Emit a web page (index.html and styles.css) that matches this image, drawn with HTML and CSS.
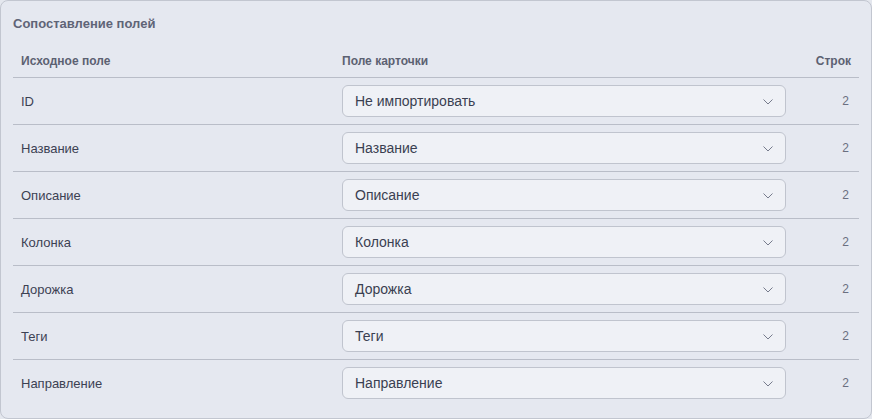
FILE: index.html
```html
<!DOCTYPE html>
<html lang="ru">
<head>
  <meta charset="UTF-8">
  <meta name="viewport" content="width=device-width, initial-scale=1.0">
  <title>Сопоставление полей</title>
  <link rel="stylesheet" href="styles.css">
</head>
<body>
  <div class="card">
    <div class="card-title">Сопоставление полей</div>
    <table class="map">
      <colgroup>
        <col class="c-src">
        <col class="c-field">
        <col class="c-rows">
      </colgroup>
      <thead>
        <tr>
          <th>Исходное поле</th>
          <th>Поле карточки</th>
          <th class="num">Строк</th>
        </tr>
      </thead>
      <tbody id="rows"></tbody>
    </table>
  </div>

  <script>
    const rows = [
      ["ID", "Не импортировать", 2],
      ["Название", "Название", 2],
      ["Описание", "Описание", 2],
      ["Колонка", "Колонка", 2],
      ["Дорожка", "Дорожка", 2],
      ["Теги", "Теги", 2],
      ["Направление", "Направление", 2]
    ];
    const chevron = '<svg width="12" height="7" viewBox="0 0 12 7"><path d="M1.5 1.5l4.5 4.5 4.5-4.5" fill="none" stroke="#767b8c" stroke-width="1"/></svg>';
    const tbody = document.getElementById("rows");
    rows.forEach(r => {
      const tr = document.createElement("tr");
      tr.innerHTML =
        "<td>" + r[0] + "</td>" +
        '<td><div class="select"><span>' + r[1] + "</span>" + chevron + "</div></td>" +
        '<td class="num">' + r[2] + "</td>";
      tbody.appendChild(tr);
    });
  </script>
</body>
</html>
```

FILE: styles.css
```css
body {
  margin: 0;
  background: #e4e7ee;
  font-family: "Liberation Sans", Arial, sans-serif;
  color: #3c4153;
}
.card {
  box-sizing: border-box;
  width: 872px;
  height: 419px;
  background: #e5e8f0;
  border: 1px solid #c2c6d0;
  border-radius: 8px;
  padding: 14px 12px 0 12px;
}
.card-title {
  font-size: 13px;
  font-weight: bold;
  color: #5f6477;
  line-height: 17px;
  margin-bottom: 9px;
}
.map {
  width: 846px;
  table-layout: fixed;
  border-collapse: collapse;
}
.c-src { width: 321px; }
.c-field { width: 460px; }
.c-rows { width: 65px; }
.map th {
  font-size: 12px;
  font-weight: bold;
  color: #5c6172;
  text-align: left;
  height: 33px;
  padding: 3px 8px 0 8px;
  border-bottom: 1px solid #b9bdc8;
}
.map td {
  font-size: 13px;
  height: 46px;
  padding: 0 8px;
  border-bottom: 1px solid #b9bdc8;
}
.map tbody tr:last-child td { border-bottom: none; }
.map .num {
  text-align: right;
  padding-right: 8px;
}
.map td.num {
  font-size: 12px;
  color: #6a6f80;
  padding-right: 10px;
}
.select {
  box-sizing: border-box;
  height: 32px;
  width: 444px;
  display: flex;
  align-items: center;
  justify-content: space-between;
  padding: 0 11px 0 12px;
  background: #eff1f6;
  border: 1px solid #c0c4ce;
  border-radius: 6px;
  font-size: 14px;
  color: #3a3f51;
}
```
